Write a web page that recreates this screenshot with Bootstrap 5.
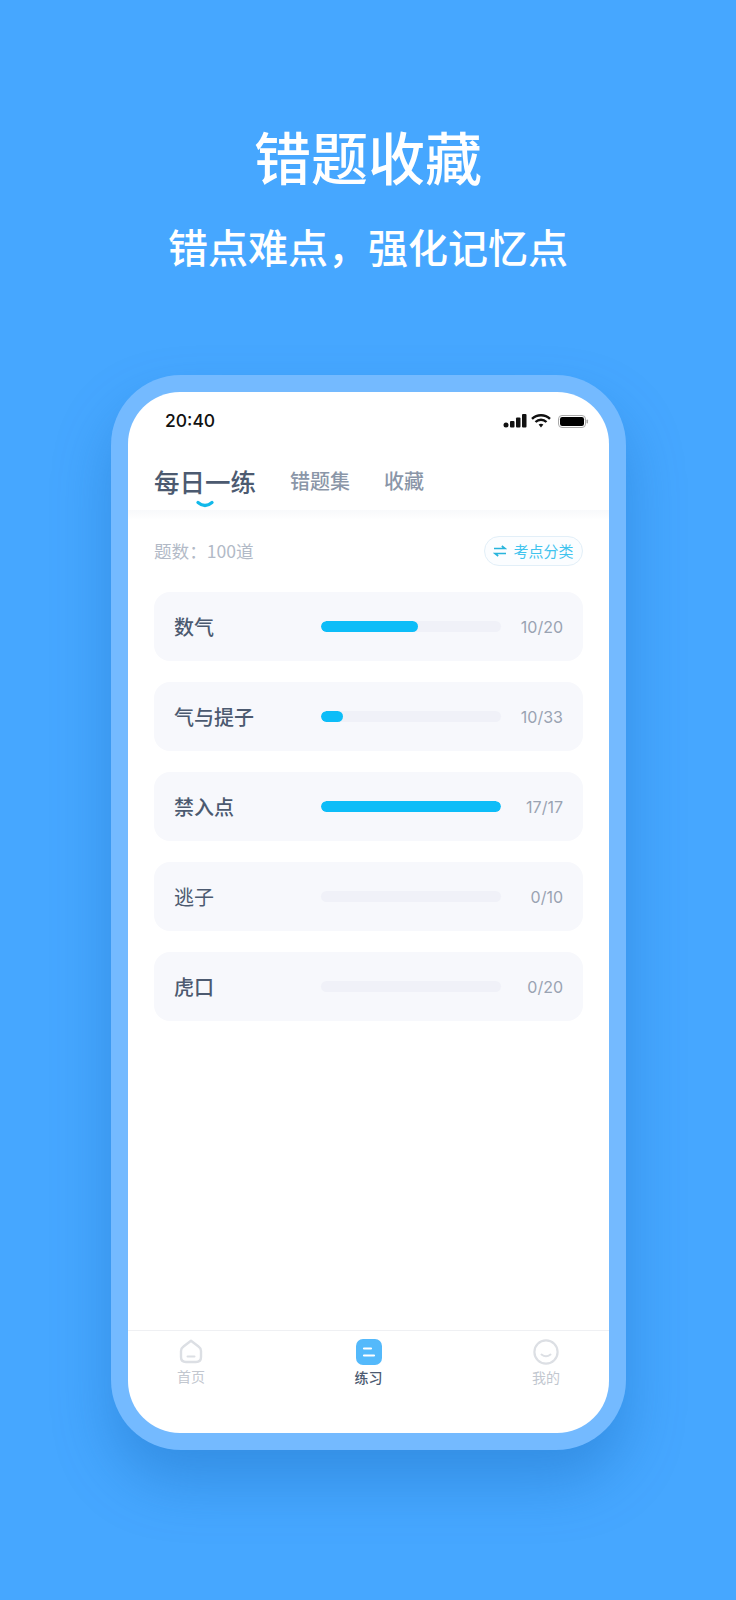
<!DOCTYPE html>
<html lang="zh">
<head>
<meta charset="utf-8">
<title>错题收藏</title>
<link href="https://cdn.jsdelivr.net/npm/bootstrap@5.3.0/dist/css/bootstrap.min.css" rel="stylesheet">
<style>
html,body{height:1600px;overflow:hidden}
body{background:#46a7ff;font-family:"Noto Sans CJK SC","Liberation Sans",sans-serif;--cyan:#0dbdf8}
.hero-title{font-size:57px;line-height:68px;font-weight:500;color:#fff;margin:0;padding-top:121px}
.hero-sub{font-size:40px;line-height:50px;font-weight:500;color:#fff;margin:0;padding-top:32px}
.phone{width:515px;height:1075px;margin:104px 0 0 111px;background:#74baff;border-radius:70px;padding:17px;box-shadow:0 32px 56px rgba(20,100,180,.36)}
.screen{height:100%;background:#fff;border-radius:52px;overflow:hidden}
.status{height:71px;padding:0 19px 13px 37px;font-family:"Inter","Liberation Sans",sans-serif;font-size:17.5px;font-weight:500;color:#111}
.tabs{height:36px;padding-left:26px;gap:34px;color:#8a96a8;font-size:20px;font-weight:500;line-height:36px;position:relative}
.tab-on{font-size:25.5px;color:#4c5a70}
.smile{position:absolute;left:67px;top:37px}
.tabrule{height:10px;margin-top:11px;background:linear-gradient(#f8f9fb,#fff)}
.content{padding:16px 26px 0;flex:1}
.summary{margin-bottom:26px}
.count{font-size:17.6px;color:#b2bac7;line-height:30px}
.pill{height:30px;width:99px;border:1px solid #e2eff8;border-radius:15px;background:#fbfdff;color:#3fc3ee;font-size:15px;gap:6px}
.row-item{height:69px;background:#f7f8fc;border-radius:16px;padding:0 20px;margin-bottom:21px}
.row-name{width:147px;font-size:20px;font-weight:500;color:#4c5a70}
.row-name.thin{font-weight:400}
.track{width:180px;height:11px;background:#f0f1f8;border-radius:6px;overflow:hidden}
.fill{height:100%;background:var(--cyan);border-radius:6px}
.num{flex:1;text-align:right;font-family:"Inter","Liberation Sans",sans-serif;font-size:16px;color:#9aa3b2}
.tabbar{height:103px;border-top:1px solid #eff0f3;padding:8px 0 0}
.tb{width:126px;font-size:14px;line-height:18px;color:#c2c7cf;gap:3px}
.tb.on{color:#4c5a70;font-weight:500}
.tb svg{display:block}
</style>
</head>
<body>
<div class="text-center">
  <h1 class="hero-title">错题收藏</h1>
  <p class="hero-sub">错点难点，强化记忆点</p>
</div>
<div class="phone">
  <div class="screen d-flex flex-column">
    <div class="status d-flex justify-content-between align-items-center flex-shrink-0">
      <span>20:40</span>
      <svg width="87" height="16" viewBox="0 0 87 16" aria-hidden="true">
        <g fill="#111"><circle cx="3" cy="12" r="2.500"/><rect x="7" y="8" width="4.500" height="6.500" rx="1"/><rect x="13" y="4.500" width="4.500" height="10" rx="1"/><rect x="19" y="1" width="4.500" height="13.500" rx="1"/></g>
        <g fill="none" stroke="#111" stroke-width="2.400"><path d="M29 5.800a13 13 0 0 1 18 0"/><path d="M32.500 9a8 8 0 0 1 11 0"/></g>
        <path d="M35.600 11.600a4 4 0 0 1 4.800 0L38 14.600z" fill="#111"/>
        <rect x="55.500" y="2.500" width="27" height="12" rx="3.500" fill="none" stroke="#aaa"/>
        <rect x="57" y="4" width="24" height="9" rx="2.200" fill="#000"/>
        <rect x="83.500" y="6.500" width="1.500" height="4" rx=".7" fill="#aaa"/>
      </svg>
    </div>
    <div class="tabs d-flex flex-shrink-0">
      <span class="tab-on">每日一练</span>
      <span>错题集</span>
      <span>收藏</span>
      <svg class="smile" width="20" height="10" viewBox="0 0 20 10" aria-hidden="true"><path d="M3 2.500q7 6 14 0" fill="none" stroke="#12b9ea" stroke-width="3.200" stroke-linecap="round"/></svg>
    </div>
    <div class="tabrule flex-shrink-0"></div>
    <div class="content">
      <div class="summary d-flex justify-content-between align-items-center">
        <span class="count">题数：100道</span>
        <span class="pill d-flex align-items-center justify-content-center">
          <svg width="14" height="14" viewBox="0 0 14 14" aria-hidden="true"><path d="M1 4.500h11L8.800 2M13 9.500H2L5.200 12" fill="none" stroke="#27b4dc" stroke-width="1.600"/></svg>
          考点分类
        </span>
      </div>
      <div class="row-item d-flex align-items-center">
        <span class="row-name">数气</span>
        <div class="track"><div class="fill" style="width:54%"></div></div>
        <span class="num">10/20</span>
      </div>
      <div class="row-item d-flex align-items-center">
        <span class="row-name">气与提子</span>
        <div class="track"><div class="fill" style="width:12%"></div></div>
        <span class="num">10/33</span>
      </div>
      <div class="row-item d-flex align-items-center">
        <span class="row-name">禁入点</span>
        <div class="track"><div class="fill" style="width:100%"></div></div>
        <span class="num">17/17</span>
      </div>
      <div class="row-item d-flex align-items-center">
        <span class="row-name thin">逃子</span>
        <div class="track"></div>
        <span class="num">0/10</span>
      </div>
      <div class="row-item d-flex align-items-center">
        <span class="row-name">虎口</span>
        <div class="track"></div>
        <span class="num">0/20</span>
      </div>
    </div>
    <div class="tabbar d-flex justify-content-between flex-shrink-0">
      <div class="tb d-flex flex-column align-items-center">
        <svg width="24" height="25" viewBox="1 0 24 25" aria-hidden="true"><path d="M13 1.800 5.500 7.500Q3 9.300 3 12V18q0 5 5 5h10q5 0 5-5V12q0-2.700-2.500-4.500z" fill="none" stroke="#dcdfe4" stroke-width="2.400" stroke-linejoin="round"/><path d="M9.500 17.500h7" stroke="#dcdfe4" stroke-width="2" stroke-linecap="round"/></svg>
        <span>首页</span>
      </div>
      <div class="tb on d-flex flex-column align-items-center">
        <svg width="26" height="26" viewBox="0 0 26 26" aria-hidden="true"><rect width="26" height="26" rx="7" fill="#54b9fb"/><path d="M8 9.500h7M8 16.500h10" stroke="#fff" stroke-width="2.200" stroke-linecap="round"/></svg>
        <span>练习</span>
      </div>
      <div class="tb d-flex flex-column align-items-center">
        <svg width="26" height="26" viewBox="0 0 26 26" aria-hidden="true"><circle cx="13" cy="13" r="11.600" fill="none" stroke="#dcdfe4" stroke-width="2.200"/><path d="M8.500 15.500q4.500 3.500 9 0" fill="none" stroke="#dcdfe4" stroke-width="2" stroke-linecap="round"/></svg>
        <span>我的</span>
      </div>
    </div>
  </div>
</div>
<script src="https://cdn.jsdelivr.net/npm/bootstrap@5.3.0/dist/js/bootstrap.bundle.min.js"></script>
</body>
</html>
